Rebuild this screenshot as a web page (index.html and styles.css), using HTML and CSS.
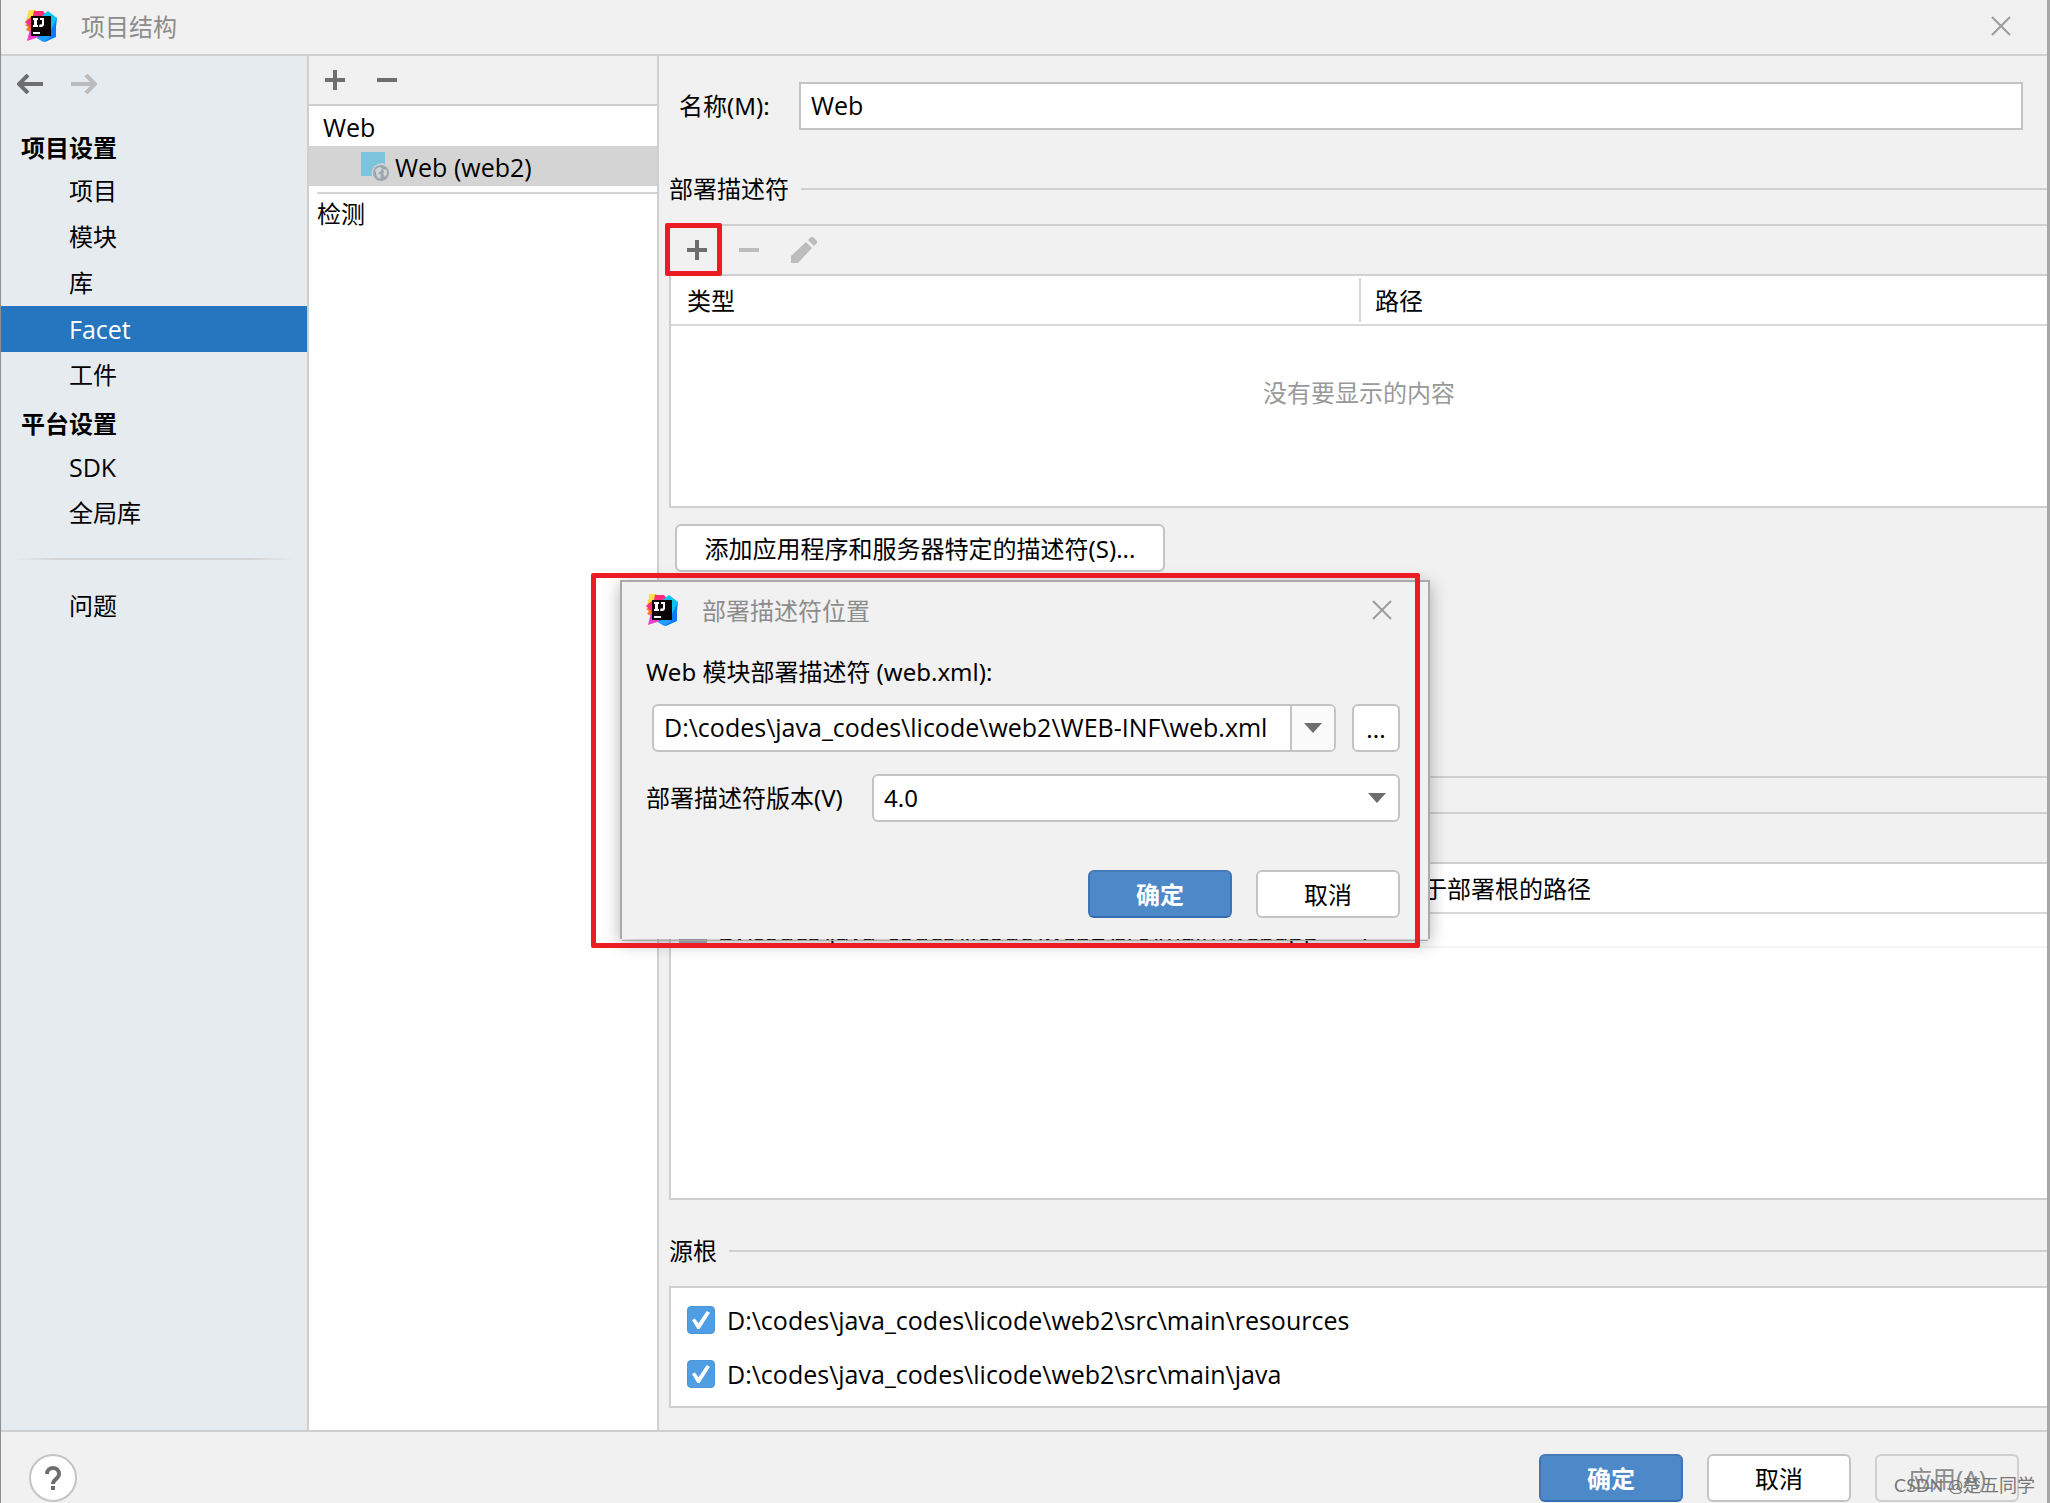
FILE: index.html
```html
<!DOCTYPE html>
<html lang="zh-CN">
<head>
<meta charset="utf-8">
<title>项目结构</title>
<link rel="stylesheet" href="styles.css">
</head>
<body>
<svg class="defs" aria-hidden="true">
  <symbol id="logo" viewBox="0 0 32 32">
    <path fill="#fdb60d" d="M4 0h6l4 6-6 10-7-4z"/>
    <path fill="#f97a12" d="M0 15l8-4v12l-7-3 2-3z"/>
    <path fill="#ff2d78" d="M9 1h9l5 6-2 4-16 4-5-3 5-4z"/>
    <path fill="#f03ccc" d="M2 31l3-12 13 3-4 5z"/>
    <path fill="#ff3280" d="M0 12l7-1v8l-4-4z"/>
    <path fill="#fde04a" d="M4 0h5l-1 6-6 3z"/>
    <path fill="#087cfa" d="M22 7l10 1-1 9v10l-11 5-8-4 8-10z"/>
    <path fill="#07c3f2" d="M17 6l6-5 9 7-6 12z"/>
    <path fill="#1e9dff" d="M12 28l6-3 8 2-8 5z"/>
    <path fill="#0a0205" d="M6 6h20v20H6z"/>
    <path fill="#fff" d="M8 22h7v2H8zM8 8h5v2h-1v5h1v2H8v-2h1v-5H8zM15 8h4v6c0 2-1 3-3 3-1 0-2 0-2-1l1-2c1 1 2 1 2-1v-3h-2z"/>
  </symbol>
  <symbol id="close" viewBox="0 0 20 20"><path d="M1 1l18 18M19 1L1 19" fill="none" stroke="#9c9c9c" stroke-width="2"/></symbol>
  <symbol id="plus" viewBox="0 0 20 20"><path d="M8 0h4v8h8v4h-8v8H8v-8H0V8h8z" fill="currentColor"/></symbol>
  <symbol id="minus" viewBox="0 0 20 20"><path d="M0 8h20v4H0z" fill="currentColor"/></symbol>
  <symbol id="back" viewBox="0 0 26 20"><path d="M26 10H3M11 1l-9 9 9 9" fill="none" stroke="currentColor" stroke-width="4"/></symbol>
  <symbol id="down" viewBox="0 0 18 10"><path d="M0 0h18l-9 10z" fill="#6e6e6e"/></symbol>
</svg>

<div class="window">
  <header class="titlebar">
    <svg class="logo"><use href="#logo"/></svg>
    <h1 class="title">项目结构</h1>
    <button class="close" aria-label="关闭"><svg class="ic"><use href="#close"/></svg></button>
  </header>

  <div class="workspace">
    <nav class="sidebar">
      <div class="history">
        <button class="plain" aria-label="后退"><svg class="arrow"><use href="#back"/></svg></button>
        <button class="plain dim" aria-label="前进"><svg class="arrow flip"><use href="#back"/></svg></button>
      </div>
      <h2 class="group">项目设置</h2>
      <a class="item" href="#project">项目</a>
      <a class="item" href="#modules">模块</a>
      <a class="item" href="#libs">库</a>
      <a class="item latin active" href="#facet">Facet</a>
      <a class="item" href="#artifacts">工件</a>
      <h2 class="group">平台设置</h2>
      <a class="item latin" href="#sdk">SDK</a>
      <a class="item" href="#global">全局库</a>
      <hr class="fade">
      <a class="item" href="#problems">问题</a>
    </nav>

    <section class="facets">
      <div class="tools">
        <button class="plain" aria-label="添加"><svg class="ic"><use href="#plus"/></svg></button>
        <button class="plain" aria-label="移除"><svg class="ic"><use href="#minus"/></svg></button>
      </div>
      <div class="node latin">Web</div>
      <div class="node leaf latin">
        <svg class="facet-icon" viewBox="0 0 28 30"><path fill="#7cc4dc" d="M0 0h24v12a10 10 0 0 0-13 12H0z"/><circle cx="20" cy="21" r="8" fill="#9aa7b0"/><path fill="#d4d4d4" d="M14 18l4-3 3 1-1 3-3 2 3 2-1 4-3-2-1-4zM22 17l4 1v4l-2 3-2-3 1-2z"/></svg>
        <span>Web (web2)</span>
      </div>
      <hr class="split">
      <div class="node check">检测</div>
    </section>

    <main class="editor">
      <div class="name-row">
        <label for="name">名称(M):</label>
        <input id="name" class="field latin" type="text" value="Web">
      </div>

      <h2 class="legend">部署描述符</h2>
      <div class="tools boxed">
        <button class="plain marked" aria-label="添加描述符"><svg class="ic"><use href="#plus"/></svg></button>
        <button class="plain dim" aria-label="移除描述符"><svg class="ic"><use href="#minus"/></svg></button>
        <button class="plain dim" aria-label="编辑描述符"><svg class="pencil" viewBox="0 0 26 26"><path fill="currentColor" d="M0 19L15 5l6 6L7 26H0zM17 3l3-3h2l4 4v2l-3 3z"/></svg></button>
      </div>
      <div class="box descriptors">
        <table class="grid">
          <thead><tr><th>类型</th><th>路径</th></tr></thead>
        </table>
        <p class="empty">没有要显示的内容</p>
      </div>
      <button class="btn wide">添加应用程序和服务器特定的描述符(S)...</button>

      <hr class="rule">
      <div class="tools boxed"></div>
      <div class="box resources">
        <table class="grid">
          <thead><tr><th></th><th>相对于部署根的路径</th></tr></thead>
          <tbody><tr><td class="latin"><span class="folder"></span>D:\codes\java_codes\licode\web2\src\main\webapp</td><td class="latin">/</td></tr></tbody>
        </table>
      </div>

      <h2 class="legend roots-title">源根</h2>
      <div class="box roots">
        <label class="root latin"><input type="checkbox" checked>D:\codes\java_codes\licode\web2\src\main\resources</label>
        <label class="root latin"><input type="checkbox" checked>D:\codes\java_codes\licode\web2\src\main\java</label>
      </div>
    </main>
  </div>

  <footer class="footer">
    <button class="help" aria-label="帮助"><svg viewBox="0 0 16 24"><path d="M2 8c0-4 3-6 6-6s6 2 6 6c0 5-6 5-6 10" fill="none" stroke="#6e6e6e" stroke-width="4"/><path d="M6 20h4v4H6z" fill="#6e6e6e"/></svg></button>
    <button class="btn primary push">确定</button>
    <button class="btn">取消</button>
    <button class="btn" disabled>应用(A)</button>
  </footer>

  <div class="dialog" role="dialog" aria-labelledby="dlg-title">
    <div class="dialog-head">
      <svg class="logo"><use href="#logo"/></svg>
      <h2 class="title" id="dlg-title">部署描述符位置</h2>
      <button class="close" aria-label="关闭对话框"><svg class="ic"><use href="#close"/></svg></button>
    </div>
    <div class="dialog-body">
      <label for="path">Web 模块部署描述符 (web.xml):</label>
      <div class="path-row">
        <div class="combo">
          <input id="path" class="latin" type="text" value="D:\codes\java_codes\licode\web2\WEB-INF\web.xml">
          <button aria-label="展开"><svg class="caret"><use href="#down"/></svg></button>
        </div>
        <button class="btn browse" aria-label="浏览">...</button>
      </div>
      <div class="version-row">
        <label for="version">部署描述符版本(V)</label>
        <div class="select">
          <select id="version"><option>4.0</option></select>
          <svg class="caret"><use href="#down"/></svg>
        </div>
      </div>
      <div class="actions">
        <button class="btn primary">确定</button>
        <button class="btn">取消</button>
      </div>
    </div>
  </div>

  <div class="callout"></div>
  <div class="watermark">CSDN @楚五同学</div>
</div>
</body>
</html>
```
FILE: styles.css
```css
* { box-sizing: border-box; }

body {
  margin: 0;
  font: 24px/32px "Noto Sans", "Noto Sans CJK SC", sans-serif;
  color: #000;
  background: #f1f1f1;
}

h1, h2, p { margin: 0; font-size: inherit; font-weight: 400; }
hr { margin: 0; border: 0; }
button, input, select { margin: 0; font: inherit; color: inherit; }
a { color: inherit; text-decoration: none; }
.defs { position: absolute; width: 0; height: 0; }
.latin { font-family: "Open Sans", "Noto Sans CJK SC", sans-serif; font-size: 25px; }

.window {
  position: relative;
  display: flex;
  flex-direction: column;
  min-height: 100vh;
  border-left: 1px solid #8e8e8e;
  border-right: 3px solid #a6a6a6;
  overflow: hidden;
}

/* Title bar */
.titlebar {
  display: flex;
  align-items: center;
  height: 56px;
  padding: 0 36px 2px 24px;
  border-bottom: 2px solid #cfcfcf;
}
.logo { width: 32px; height: 32px; margin-right: 24px; }
.title { padding-top: 2px; color: #8c8c8c; }
.close { margin-left: auto; padding: 0; border: 0; background: none; display: flex; }
.ic { display: block; width: 20px; height: 20px; }

.workspace { flex: 1; display: flex; }
.plain { display: flex; padding: 0; border: 0; background: none; color: #6e6e6e; }
.dim { color: #bcbcbc; }

/* Sidebar */
.sidebar { width: 308px; background: #e6ebef; border-right: 2px solid #cfcfcf; }
.history { display: flex; gap: 28px; height: 66px; padding: 18px 16px; }
.arrow { width: 26px; height: 20px; }
.flip { transform: scaleX(-1); }
.group { height: 46px; padding: 10px 20px 0; font-weight: 700; }
.item { display: block; height: 46px; padding: 7px 68px 0; }
.item.active { background: #2675bf; color: #fff; }
.fade {
  height: 2px;
  margin: 22px 12px 23px;
  background: linear-gradient(90deg, transparent, #d4d4d4 16%, #d4d4d4 84%, transparent);
}

/* Facet list */
.facets { width: 350px; background: #fff; border-right: 2px solid #cfcfcf; }
.tools {
  display: flex;
  align-items: center;
  gap: 32px;
  height: 50px;
  padding: 0 16px;
  background: #f1f1f1;
  border-bottom: 2px solid #cfcfcf;
}
.node { display: flex; align-items: center; height: 40px; padding: 2px 14px 0; }
.leaf { gap: 6px; padding: 2px 52px 0; background: #d4d4d4; }
.facet-icon { width: 28px; height: 30px; }
.split { height: 2px; margin: 6px 0 0 8px; background: #d4d4d4; }
.check { padding: 0 8px; }

/* Editor */
.editor { flex: 1; display: flex; flex-direction: column; padding: 26px 0 22px 10px; }
.name-row { display: flex; align-items: center; padding: 0 24px 0 10px; }
.name-row label { width: 120px; }
.field { flex: 1; height: 48px; padding: 0 10px 3px; border: 2px solid #c4c4c4; background: #fff; }
.legend { display: flex; align-items: center; gap: 12px; height: 32px; margin: 43px 0 19px; }
.legend::after { content: ""; flex: 1; height: 2px; background: #cfcfcf; }
.boxed { height: 52px; padding: 0 18px; border-top: 2px solid #cfcfcf; }
.marked { position: relative; }
.marked::after {
  content: "";
  position: absolute;
  inset: -17px -15px -16px -22px;
  border: 5px solid #ed1c24;
  border-radius: 2px;
}
.pencil { width: 26px; height: 26px; }
.box { background: #fff; border: solid #cfcfcf; border-width: 0 0 2px 2px; }
.descriptors { height: 232px; }
.grid { width: 100%; table-layout: fixed; border-collapse: separate; border-spacing: 0; }
.grid th {
  height: 50px;
  padding: 2px 14px 0 16px;
  border-bottom: 2px solid #d8d8d8;
  text-align: left;
  font-weight: 400;
  background: linear-gradient(#d8d8d8, #d8d8d8) left center / 2px 44px no-repeat;
}
.grid th:first-child { background: none; }
.grid td { height: 34px; padding: 2px 4px 0; line-height: 30px; border-bottom: 2px solid #f5f5f5; white-space: nowrap; }
.folder { display: inline-block; width: 28px; height: 20px; margin: 0 11px 0 4px; background: #a9b3bb; vertical-align: middle; }
.empty { margin-top: 51px; text-align: center; color: #999; }
.rule { height: 2px; margin: 204px 0 34px; background: #cfcfcf; }
.resources { flex: 1; }
.roots-title { margin: 35px 0 19px; }
.roots { display: flex; flex-direction: column; gap: 22px; padding: 16px; border-top-width: 2px; height: 122px; }
.root { display: flex; align-items: center; gap: 12px; }
.root input {
  appearance: none;
  width: 28px;
  height: 28px;
  margin: 0;
  border: 1px solid #4b97d9;
  border-radius: 4px;
  background: #4f9ee3;
  display: grid;
  place-items: center;
}
.root input::after {
  content: "";
  width: 18px;
  height: 18px;
  background: #fff;
  clip-path: polygon(0 50%, 16% 42%, 36% 68%, 82% 0, 100% 10%, 42% 100%, 30% 100%);
}

/* Buttons */
.btn {
  width: 144px;
  height: 48px;
  padding: 1px 0 0;
  border: 2px solid #c4c4c4;
  border-radius: 6px;
  background: #fff;
}
.btn:disabled { color: #8c8c8c; border-color: #cfcfcf; background: #f1f1f1; }
.primary { border-color: #4579b8 #3f74b4 #346dad; background: #4d89c9; color: #fff; font-weight: 700; }
.wide { width: 490px; margin: 16px 0 0 6px; }

/* Footer */
.footer {
  display: flex;
  gap: 24px;
  height: 73px;
  padding: 22px 28px 0;
  border-top: 2px solid #cfcfcf;
}
.help {
  display: grid;
  place-items: center;
  width: 48px;
  height: 48px;
  padding: 0;
  border: 2px solid #c4c4c4;
  border-radius: 50%;
  background: #fff;
}
.help svg { width: 16px; height: 24px; }
.push { margin-left: auto; }

/* Floating dialog */
.dialog {
  position: absolute;
  left: 619px;
  top: 580px;
  width: 810px;
  height: 359px;
  border: 2px solid #a9a9a9;
  border-bottom: 0;
  background: #f1f1f1;
  box-shadow: 0 4px 16px rgba(0, 0, 0, .3);
}
.dialog::after {
  content: "";
  position: absolute;
  inset: auto 0 -2px;
  height: 1px;
  background: #a9a9a9;
}
.dialog-head { display: flex; align-items: center; height: 60px; padding: 0 36px 4px 24px; }
.dialog-body { padding: 14px 28px 0 24px; }
.path-row { display: flex; gap: 16px; margin: 16px 0 22px; padding-left: 6px; }
.combo, .select { flex: 1; display: flex; height: 48px; border: 2px solid #c4c4c4; border-radius: 6px; background: #fff; overflow: hidden; }
.combo input { flex: 1; min-width: 0; padding: 0 10px 3px; border: 0; background: none; }
.combo button { width: 44px; padding: 0 12px; border: 0; border-left: 2px solid #c4c4c4; background: #fafafa; }
.caret { display: block; width: 18px; height: 10px; }
.browse { width: 48px; }
.version-row { display: flex; align-items: center; }
.version-row label { width: 226px; }
.select { align-items: center; padding-right: 12px; }
.select select { flex: 1; height: 44px; padding: 0 10px; border: 0; appearance: none; background: none; }
.actions { display: flex; justify-content: flex-end; gap: 24px; margin-top: 48px; }

/* Marks over the window */
.callout {
  position: absolute;
  left: 590px;
  top: 573px;
  width: 829px;
  height: 375px;
  border: 5px solid #ed1c24;
  border-radius: 2px;
}
.watermark {
  position: absolute;
  right: 12px;
  bottom: 2px;
  font-family: Lato, "Noto Sans CJK SC", sans-serif;
  font-size: 18px;
  color: #777;
}
```
